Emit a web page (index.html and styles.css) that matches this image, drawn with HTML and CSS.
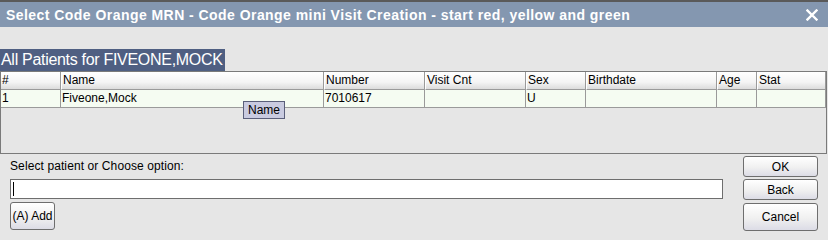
FILE: index.html
```html
<!DOCTYPE html>
<html>
<head>
<meta charset="utf-8">
<link rel="stylesheet" href="styles.css">
</head>
<body>
<div class="dialog">
  <div class="titlebar">
    <span class="title">Select Code Orange MRN - Code Orange mini Visit Creation - start red, yellow and green</span>
    <svg class="close" width="12" height="12" viewBox="0 0 12 12"><path d="M1.5 1.5 L10.5 10.5 M10.5 1.5 L1.5 10.5" stroke="#fff" stroke-width="2.4" stroke-linecap="square"/></svg>
  </div>
  <div class="content">
    <div class="caption">All Patients for FIVEONE,MOCK</div>
    <div class="table">
      <div class="row head">
        <div class="c c1">#</div>
        <div class="c c2">Name</div>
        <div class="c c3">Number</div>
        <div class="c c4">Visit Cnt</div>
        <div class="c c5">Sex</div>
        <div class="c c6">Birthdate</div>
        <div class="c c7">Age</div>
        <div class="c c8">Stat</div>
      </div>
      <div class="row body">
        <div class="c c1">1</div>
        <div class="c c2">Fiveone,Mock</div>
        <div class="c c3">7010617</div>
        <div class="c c4"></div>
        <div class="c c5">U</div>
        <div class="c c6"></div>
        <div class="c c7"></div>
        <div class="c c8"></div>
      </div>
      <div class="tooltip">Name</div>
    </div>
    <div class="bottom">
      <div class="left">
        <div class="label">Select patient or Choose option:</div>
        <div class="input"><span class="caret"></span></div>
        <div class="btn add">(A) Add</div>
      </div>
      <div class="right">
        <div class="btn ok">OK</div>
        <div class="btn back">Back</div>
        <div class="btn cancel">Cancel</div>
      </div>
    </div>
  </div>
</div>
</body>
</html>
```

FILE: styles.css
```css
html, body {
  margin: 0;
  padding: 0;
  background: #e6e6e6;
}
.dialog {
  width: 828px;
  height: 239px;
  font-family: "Liberation Sans", Arial, sans-serif;
  font-size: 12px;
  color: #000;
  background: #e6e6e6;
  overflow: hidden;
}
.titlebar {
  height: 25px;
  border-top: 2px solid #5a5a5a;
  background: #8497b0;
  display: flex;
  align-items: center;
  justify-content: space-between;
  padding: 0 10px 0 6px;
}
.title {
  color: #fff;
  font-weight: bold;
  font-size: 14px;
  letter-spacing: 0.45px;
}
.close {
  display: block;
}
.content {
  position: relative;
}
.caption {
  margin-top: 22px;
  display: inline-block;
  background: #4f5f82;
  color: #fff;
  font-size: 16px;
  letter-spacing: -0.3px;
  height: 22px;
  line-height: 22px;
  padding: 0 2px 0 1px;
}
.table {
  position: relative;
  height: 81px;
  width: 825px;
  border: 1px solid #7a7a7a;
  background: #e6e6e6;
}
.row {
  display: grid;
  grid-template-columns: 60px 263px 101px 101px 60px 131px 40px 69px;
}
.head {
  height: 18px;
}
.head .c {
  background: linear-gradient(#ffffff, #f4f4f4 60%, #dcdcdc);
  border-right: 1px solid #9a9a9a;
  border-bottom: 1px solid #9a9a9a;
  border-left: 1px solid #fff;
  line-height: 17px;
}
.body {
  height: 17px;
  border-bottom: 1px solid #9a9a9a;
}
.body .c {
  background: #f5fcf2;
  border-right: 1px solid #9a9a9a;
  line-height: 17px;
}
.c {
  padding-left: 1px;
  overflow: hidden;
  white-space: nowrap;
}
.c1 { border-left: none !important; }
.tooltip {
  position: absolute;
  left: 242px;
  top: 29px;
  width: 40px;
  height: 16px;
  border: 1px solid #5a5f7a;
  background: #c9cbe0;
  text-align: center;
  line-height: 16px;
  font-size: 12px;
}
.bottom {
  display: flex;
  justify-content: space-between;
  padding: 2px 10px 0 10px;
}
.left {
  width: 713px;
}
.label {
  height: 21px;
  line-height: 16px;
  padding-top: 2px;
  box-sizing: border-box;
  letter-spacing: 0.1px;
}
.input {
  height: 20px;
  background: #fff;
  border: 1px solid #6e6e6e;
  box-sizing: border-box;
  width: 713px;
  margin-top: 2px;
  display: flex;
  align-items: center;
  padding-left: 2px;
}
.caret {
  width: 1px;
  height: 14px;
  background: #000;
}
.btn {
  box-sizing: border-box;
  border: 1px solid #6e6e6e;
  border-radius: 3px;
  background: linear-gradient(#ffffff, #f0f0f0 55%, #dcdce6);
  text-align: center;
  display: flex;
  align-items: center;
  justify-content: center;
}
.add {
  width: 45px;
  height: 28px;
  margin-top: 3px;
  font-size: 12px;
}
.right {
  display: flex;
  flex-direction: column;
  gap: 2px;
  width: 75px;
  margin-right: 0;
}
.ok { height: 21px; }
.back { height: 21px; }
.cancel { height: 28px; margin-top: 1px; }
```
